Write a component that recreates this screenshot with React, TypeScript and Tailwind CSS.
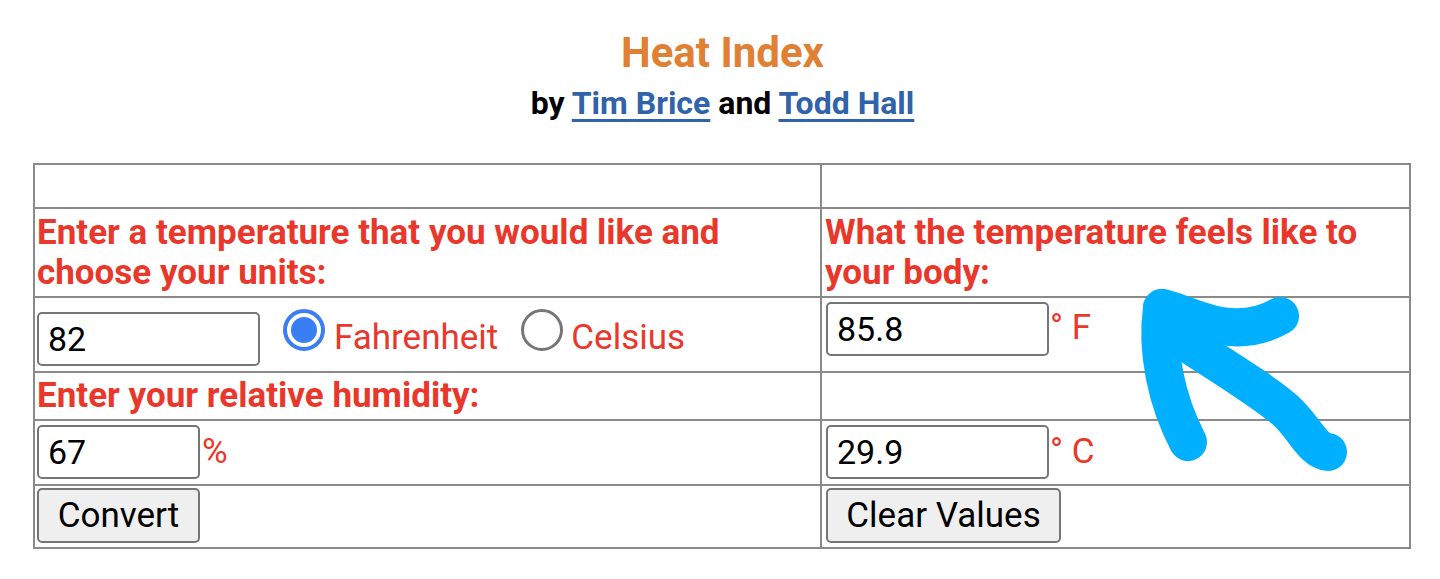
import React from 'react';

const red = 'text-[#e9382b]';

function Radio({ checked }: { checked?: boolean }) {
  if (checked) {
    return (
      <span className="inline-block w-[42px] h-[42px] rounded-full border-[4px] border-[#3a7ef3] bg-white p-[4px]">
        <span className="block w-full h-full rounded-full bg-[#3a7ef3]" />
      </span>
    );
  }
  return <span className="inline-block w-[42px] h-[42px] rounded-full border-[3px] border-[#767676] bg-white" />;
}

function Field({ value, w }: { value: string; w: string }) {
  return (
    <input
      readOnly
      value={value}
      className={`${w} h-[54px] border-2 border-[#767676] rounded-[5px] bg-white px-[9px] text-[34px] text-black outline-none`}
    />
  );
}

function Btn({ label, w }: { label: string; w: string }) {
  return (
    <button className={`${w} h-[55px] border-2 border-[#767676] rounded-[5px] bg-[#efefef] text-[35px] leading-[40px] text-black`}>
      {label}
    </button>
  );
}

export default function App() {
  const cell = 'border-r-2 border-b-2 border-[#8a8a8a]';
  return (
    <div className="relative w-[1440px] h-[579px] overflow-hidden bg-white font-[Roboto,sans-serif]">
      <div className="pt-[29px] pl-[5px] text-center">
        <h1 className="text-[42px] leading-[48px] font-bold text-[#e17f32]">Heat Index</h1>
        <p className="mt-[7px] text-[32px] leading-[38px] font-bold text-black">
          by{' '}
          <a className="text-[#3063a9] underline decoration-[3px] underline-offset-[5px]">Tim Brice</a>{' '}
          and{' '}
          <a className="text-[#3063a9] underline decoration-[3px] underline-offset-[5px]">Todd Hall</a>
        </p>
      </div>

      <div className="ml-[33px] mt-[41px] w-[1378px] grid grid-cols-[787px_589px] border-l-2 border-t-2 border-[#8a8a8a]">
        {/* row 1 */}
        <div className={`${cell} h-[44px]`} />
        <div className={`${cell} h-[44px]`} />

        {/* row 2 */}
        <div className={`${cell} h-[89px] pl-[2px] pt-[4px] text-[35px] leading-[40px] font-bold ${red}`}>
          Enter a temperature that you would like and choose your units:
        </div>
        <div className={`${cell} h-[89px] pl-[3px] pt-[4px] text-[35px] leading-[40px] font-bold ${red}`}>
          What the temperature feels like to your body:
        </div>

        {/* row 3 */}
        <div className={`${cell} h-[75px] pl-[2px] flex items-start`}>
          <div className="mt-[14px]">
            <Field value="82" w="w-[223px]" />
          </div>
          <div className="mt-[11px] ml-[23px]">
            <Radio checked />
          </div>
          <span className={`mt-[20px] ml-[9px] text-[35px] leading-[40px] ${red}`}>Fahrenheit</span>
          <div className="mt-[11px] ml-[23px]">
            <Radio />
          </div>
          <span className={`mt-[20px] ml-[8px] text-[35px] leading-[40px] ${red}`}>Celsius</span>
        </div>
        <div className={`${cell} h-[75px] pl-[4px] flex items-start`}>
          <div className="mt-[4px]">
            <Field value="85.8" w="w-[223px]" />
          </div>
          <span className={`mt-[10px] ml-[1px] text-[35px] leading-[40px] ${red}`}>° F</span>
        </div>

        {/* row 4 */}
        <div className={`${cell} h-[48px] pl-[2px] pt-[3px] text-[35px] leading-[40px] font-bold ${red}`}>
          Enter your relative humidity:
        </div>
        <div className={`${cell} h-[48px]`} />

        {/* row 5 */}
        <div className={`${cell} h-[65px] pl-[2px] flex items-start`}>
          <div className="mt-[4px]">
            <Field value="67" w="w-[163px]" />
          </div>
          <span className={`mt-[11px] ml-[2px] text-[35px] leading-[40px] ${red}`}>%</span>
        </div>
        <div className={`${cell} h-[65px] pl-[4px] flex items-start`}>
          <div className="mt-[4px]">
            <Field value="29.9" w="w-[223px]" />
          </div>
          <span className={`mt-[11px] ml-[1px] text-[35px] leading-[40px] ${red}`}>° C</span>
        </div>

        {/* row 6 */}
        <div className={`${cell} h-[63px] pl-[2px] pt-[2px]`}>
          <Btn label="Convert" w="w-[163px]" />
        </div>
        <div className={`${cell} h-[63px] pl-[4px] pt-[2px]`}>
          <Btn label="Clear Values" w="w-[235px]" />
        </div>
      </div>

      {/* hand-drawn annotation arrow */}
      <svg className="absolute inset-0 pointer-events-none" width="1440" height="579" viewBox="0 0 1440 579">
        <g fill="none" stroke="#00b0ff" strokeWidth="38" strokeLinecap="round" strokeLinejoin="round">
          <path d="M1280 316 C1255 330 1230 330 1205 322 C1185 316 1172 310 1162 308" />
          <path d="M1162 308 C1156 350 1166 400 1188 442" />
          <path d="M1176 336 C1222 366 1262 390 1285 410 C1305 428 1312 450 1328 452" />
        </g>
      </svg>
    </div>
  );
}
